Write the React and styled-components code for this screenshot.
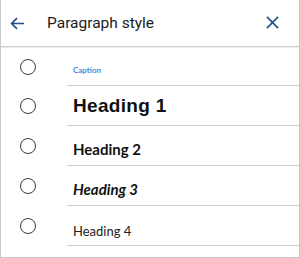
import React from 'react';
import styled, { createGlobalStyle } from 'styled-components';

const GlobalStyle = createGlobalStyle`
  body {
    margin: 0;
    background: #fff;
  }
`;

const STYLES = [
  { id: 'caption', label: 'Caption' },
  { id: 'h1', label: 'Heading 1' },
  { id: 'h2', label: 'Heading 2' },
  { id: 'h3', label: 'Heading 3' },
  { id: 'h4', label: 'Heading 4' },
];

const Panel = styled.div`
  box-sizing: border-box;
  width: 300px;
  height: 258px;
  border: 1px solid #c9c9c9;
  border-top: none;
  background: #fff;
  overflow: hidden;
`;

const Header = styled.div`
  display: flex;
  align-items: center;
  height: 46px;
  border-bottom: 1px solid #cfcfcf;
  box-shadow: 0 1px 0 #ececec;
`;

const IconButton = styled.button`
  display: flex;
  align-items: center;
  justify-content: center;
  width: ${p => p.$w}px;
  height: 46px;
  padding: 0;
  border: none;
  background: none;
  color: #234d86;
  cursor: pointer;
`;

const Title = styled.h1`
  flex: 1;
  margin: 0;
  font-family: Roboto, "Liberation Sans", sans-serif;
  font-size: 15.5px;
  font-weight: 400;
  color: #1c1c1c;
  padding-left: 13px;
`;

const List = styled.div`
  display: flex;
  flex-direction: column;
  padding-top: 1px;
`;

const Row = styled.div`
  display: flex;
  height: ${p => p.$h}px;
`;

const RadioCell = styled.div`
  display: flex;
  align-items: center;
  justify-content: center;
  width: 54px;
  flex: none;
`;

const Radio = styled.span`
  box-sizing: border-box;
  width: 16px;
  height: 16px;
  border-radius: 50%;
  border: 1.5px solid #3c3c3c;
`;

const LabelCell = styled.div`
  flex: 1;
  display: flex;
  align-items: flex-end;
  margin-left: 12px;
  padding-left: 6px;
  border-bottom: 1px solid #cfcfcf;
`;

const Label = styled.span`
  display: block;
  line-height: 1;
  color: #111;
  ${p => p.$kind === 'caption' && `
    font-family: Lato, "Open Sans", sans-serif;
    font-weight: 700;
    font-size: 8px;
    color: #3d8ddb;
    padding-bottom: 11px;
  `}
  ${p => p.$kind === 'h1' && `
    font-family: "Liberation Sans", Arial, sans-serif;
    font-weight: 700;
    font-size: 19px;
    letter-spacing: 0.3px;
    padding-bottom: 10px;
  `}
  ${p => p.$kind === 'h2' && `
    font-family: Lato, sans-serif;
    font-weight: 700;
    font-size: 15px;
    padding-bottom: 8px;
  `}
  ${p => p.$kind === 'h3' && `
    font-family: Lato, sans-serif;
    font-weight: 700;
    font-style: italic;
    font-size: 15px;
    padding-bottom: 8px;
  `}
  ${p => p.$kind === 'h4' && `
    font-family: Lato, sans-serif;
    font-weight: 400;
    font-size: 13px;
    color: #222;
    padding-bottom: 7px;
  `}
`;

const BackIcon = () => (
  <svg width="15" height="15" viewBox="0 0 16 16" fill="none" stroke="currentColor" strokeWidth="1.7">
    <path d="M15 8H1.8M7.5 2.2L1.7 8l5.8 5.8" />
  </svg>
);

const CloseIcon = () => (
  <svg width="13" height="13" viewBox="0 0 14 14" fill="none" stroke="currentColor" strokeWidth="1.7">
    <path d="M1 1l12 12M13 1L1 13" />
  </svg>
);

export default function App() {
  return (
    <>
      <GlobalStyle />
      <Panel>
        <Header>
          <IconButton $w={33} aria-label="Back">
            <BackIcon />
          </IconButton>
          <Title>Paragraph style</Title>
          <IconButton $w={54} style={{ paddingBottom: 2 }} aria-label="Close">
            <CloseIcon />
          </IconButton>
        </Header>
        <List>
          {STYLES.map((s, i) => (
            <Row key={s.id} $h={i === 0 ? 38 : 40}>
              <RadioCell>
                <Radio />
              </RadioCell>
              <LabelCell>
                <Label $kind={s.id}>{s.label}</Label>
              </LabelCell>
            </Row>
          ))}
        </List>
      </Panel>
    </>
  );
}
